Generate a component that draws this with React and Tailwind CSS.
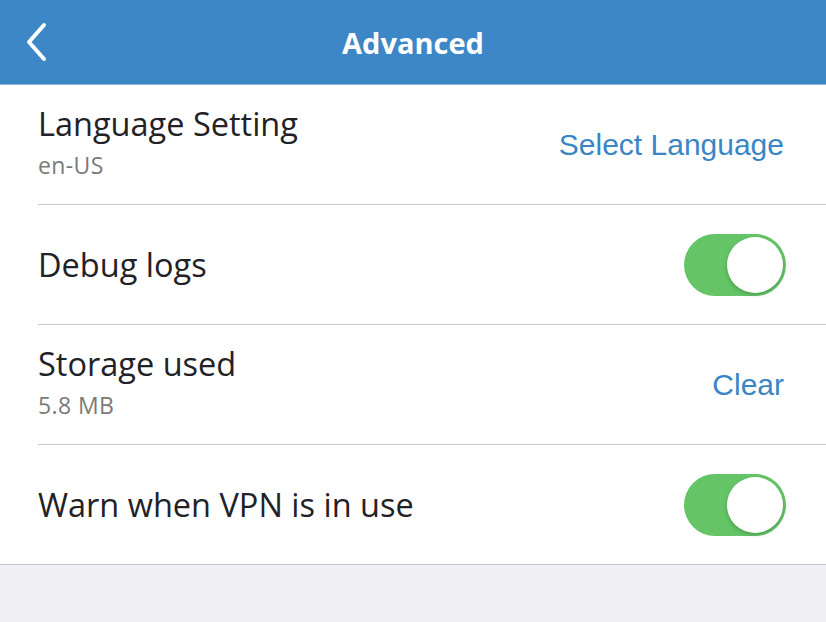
import { useState } from "react";

function Toggle({ on, onChange }) {
  return (
    <button
      onClick={() => onChange(!on)}
      className={`relative w-[102px] h-[62px] rounded-full shrink-0 ${on ? "bg-[#64c466]" : "bg-[#e5e5ea]"}`}
    >
      <span
        className={`absolute top-[3px] w-[56px] h-[56px] rounded-full bg-white shadow-[0_2px_4px_rgba(0,0,0,0.2)] ${on ? "left-[43px]" : "left-[3px]"}`}
      />
    </button>
  );
}

function Row({ title, subtitle, right, last }) {
  return (
    <div className={`h-[120px] flex ${last ? "border-b border-[#c8c7cc]" : ""}`}>
      <div className={`flex-1 h-full flex items-center justify-between ml-[38px] pr-[40px] ${last ? "" : "border-b border-[#c8c7cc]"}`}>
        <div className={`flex flex-col ${subtitle ? "self-start pt-[20px]" : ""}`}>
          <span className="text-[32.5px] leading-[38px] text-[#222226]">{title}</span>
          {subtitle && (
            <span className="text-[23px] leading-[28px] tracking-[0.4px] text-[#7a7a7a] mt-[8px]">{subtitle}</span>
          )}
        </div>
        {right}
      </div>
    </div>
  );
}

export default function App() {
  const [debug, setDebug] = useState(true);
  const [vpn, setVpn] = useState(true);
  const link = "text-[30px] text-[#3a86c5] mr-[2px]";
  const linkFont = { fontFamily: "'Liberation Sans', Arial, sans-serif" };

  return (
    <div className="w-[826px] h-[622px] bg-[#efeff4] overflow-hidden" style={{ fontFamily: "'Open Sans', 'Noto Sans', sans-serif" }}>
      <div className="h-[85px] bg-[#3d87c6] border-b border-[#8fb6dc] relative flex items-center justify-center">
        <button className="absolute left-[20px] top-[21px] w-[32px] h-[42px] flex items-center justify-center">
          <svg width="26" height="40" viewBox="0 0 26 40" fill="none">
            <path d="M21 3 L6 20 L21 37" stroke="white" strokeWidth="4" strokeLinecap="round" strokeLinejoin="round" />
          </svg>
        </button>
        <h1 className="text-white font-bold text-[29px] leading-none">Advanced</h1>
      </div>

      <div className="bg-white">
        <Row
          title="Language Setting"
          subtitle="en-US"
          right={<span className={link} style={linkFont}>Select Language</span>}
        />
        <Row title="Debug logs" right={<Toggle on={debug} onChange={setDebug} />} />
        <Row
          title="Storage used"
          subtitle="5.8 MB"
          right={<span className={link} style={linkFont}>Clear</span>}
        />
        <Row title="Warn when VPN is in use" right={<Toggle on={vpn} onChange={setVpn} />} last />
      </div>
    </div>
  );
}
